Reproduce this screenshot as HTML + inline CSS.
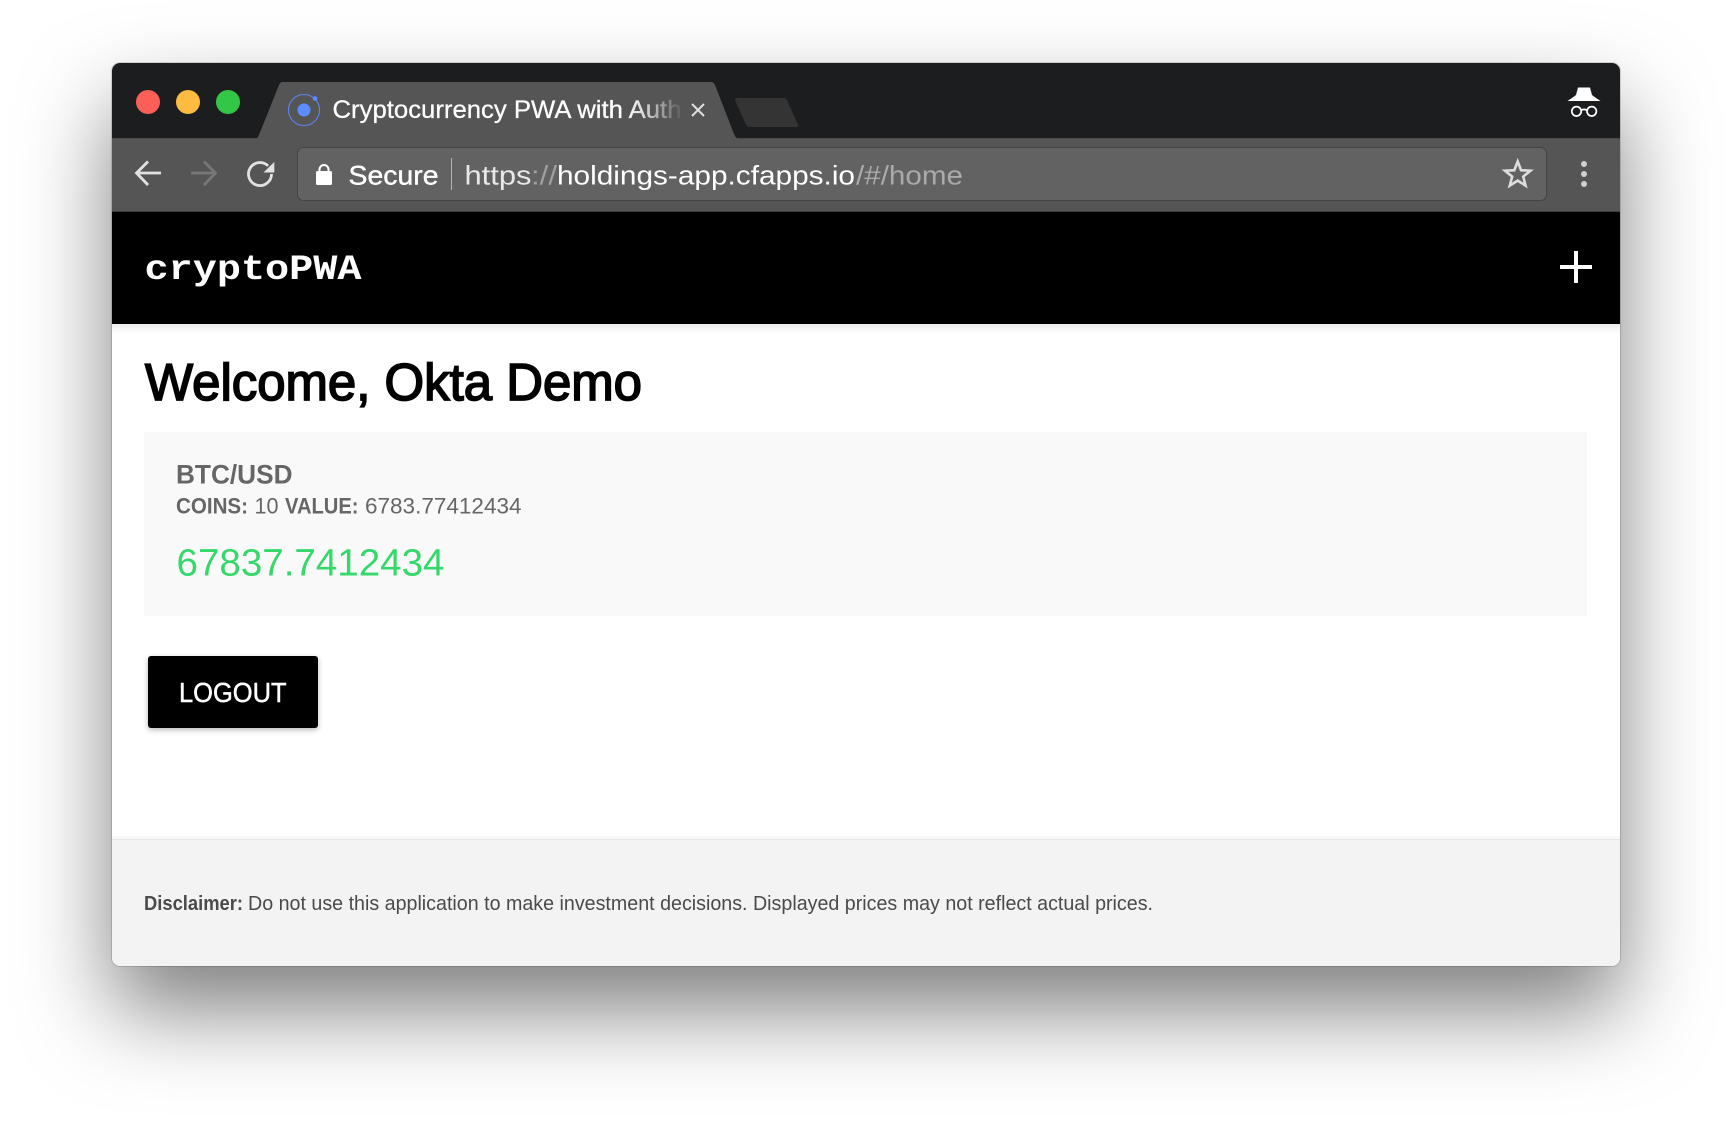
<!DOCTYPE html>
<html lang="en">
<head>
<meta charset="utf-8">
<title>cryptoPWA</title>
<style>
html,body{margin:0;padding:0;background:#fff;width:1732px;height:1126px;overflow:hidden}
#win{position:absolute;left:112px;top:63px;width:1508px;height:903px;border-radius:8px;overflow:hidden;background:#fff;box-shadow:0 44px 88px rgba(0,0,0,.5),0 0 0 1px rgba(0,0,0,.14)}
#win svg{position:absolute;left:-112px;top:-63px}
text{font-family:"Liberation Sans",sans-serif}
</style>
</head>
<body>
<div id="win">
<svg width="1732" height="1126" viewBox="0 0 1732 1126" xmlns="http://www.w3.org/2000/svg">
<defs>
<linearGradient id="fade" gradientUnits="userSpaceOnUse" x1="625" y1="0" x2="682" y2="0">
<stop offset="0" stop-color="#fff"/><stop offset="0.35" stop-color="#d8d8d8"/><stop offset="1" stop-color="#5c5c5c"/>
</linearGradient>
<linearGradient id="hs" x1="0" y1="0" x2="0" y2="1">
<stop offset="0" stop-color="#000" stop-opacity=".07"/><stop offset="1" stop-color="#000" stop-opacity="0"/>
</linearGradient>
</defs>
<!-- tab strip -->
<rect x="112" y="63" width="1508" height="75" fill="#1c1d1f"/>
<circle cx="148" cy="102" r="12" fill="#fc5f58"/>
<circle cx="188" cy="102" r="12" fill="#fdbc40"/>
<circle cx="228" cy="102" r="12" fill="#33c748"/>
<!-- toolbar -->
<rect x="112" y="138" width="1508" height="73" fill="#555"/>
<rect x="112" y="138" width="1508" height="1" fill="#3a3a3a" opacity=".4"/>
<rect x="112" y="211" width="1508" height="1" fill="#3c3c3c"/>
<!-- tab -->
<path d="M254 139C257 139 258 137 259 135L279 85C280 83 281 82 283 82H711C713 82 714 83 715 85L734 134C735 136 736 139 740 139Z" fill="#555"/>
<path d="M737 98H783C785 98 786 99 787 100L798 125C798.500 126 798 127 796 127H750C748 127 747 126 746 125L735 100C734.500 99 735 98 737 98Z" fill="#343434"/>
<circle cx="304" cy="110" r="15.500" fill="none" stroke="#5b86f0" stroke-width="1.100"/>
<circle cx="304" cy="110" r="6.500" fill="#5c8cff"/>
<circle cx="315" cy="98.500" r="2.300" fill="#5c8cff"/>
<text x="332.500" y="118" font-size="25" fill="url(#fade)" stroke="url(#fade)" stroke-width=".3" textLength="349" lengthAdjust="spacingAndGlyphs">Cryptocurrency PWA with Auth</text>
<path d="M692 104L704 116M704 104L692 116" stroke="#ddd" stroke-width="2" fill="none"/>
<!-- incognito -->
<path d="M1578 87.500H1590L1592 95C1594.500 97 1597.500 99 1600.500 101H1567.500C1570.500 99 1573.500 97 1576 95Z" fill="#fff"/>
<circle cx="1576.500" cy="111.300" r="4.700" fill="none" stroke="#fff" stroke-width="1.700"/>
<circle cx="1591.700" cy="111.300" r="4.700" fill="none" stroke="#fff" stroke-width="1.700"/>
<path d="M1581 110.300Q1584 108.500 1587 110.300" fill="none" stroke="#fff" stroke-width="1.700"/>
<!-- nav icons -->
<path d="M161 173H137M148 161.500L136.500 173L148 185" fill="none" stroke="#e2e2e2" stroke-width="2.800"/>
<path d="M191 173H215M204 161.500L215.500 173L204 185" fill="none" stroke="#777" stroke-width="2.800"/>
<path d="M268.100 165.900A11.500 11.500 0 1 0 271.500 174" fill="none" stroke="#e2e2e2" stroke-width="2.800"/>
<path d="M274.300 162V172.500H263.500Z" fill="#e2e2e2"/>
<rect x="297.500" y="147.500" width="1249" height="53" rx="6" fill="#626262" stroke="#454545"/>
<path d="M319.500 172V169.500A4.500 4.500 0 0 1 328.500 169.500V172" fill="none" stroke="#fff" stroke-width="2"/>
<rect x="316" y="171" width="16" height="14" rx="1.500" fill="#fff"/>
<text x="348.500" y="184.700" font-size="27" fill="#fff" stroke="#fff" stroke-width=".4" textLength="90" lengthAdjust="spacingAndGlyphs">Secure</text>
<rect x="451" y="158" width="1" height="32" fill="#b5b5b5"/>
<text x="464.500" y="184.700" font-size="27" fill="#e8e8e8" textLength="67" lengthAdjust="spacingAndGlyphs">https</text>
<text x="531" y="184.700" font-size="27" fill="#a0a0a0" textLength="26" lengthAdjust="spacingAndGlyphs">://</text>
<text x="557" y="184.700" font-size="27" fill="#fff" textLength="298" lengthAdjust="spacingAndGlyphs">holdings-app.cfapps.io</text>
<text x="856" y="184.700" font-size="27" fill="#aaa" textLength="107" lengthAdjust="spacingAndGlyphs">/#/home</text>
<path d="M1517.700 161.500L1521.100 170.200L1530.400 170.700L1523.200 176.600L1525.600 185.600L1517.700 180.600L1509.800 185.600L1512.200 176.600L1505 170.700L1514.300 170.200Z" fill="none" stroke="#ddd" stroke-width="2.600" stroke-linejoin="miter"/>
<circle cx="1584" cy="164" r="3" fill="#d0d0d0"/>
<circle cx="1584" cy="174" r="3" fill="#d0d0d0"/>
<circle cx="1584" cy="184" r="3" fill="#d0d0d0"/>
<!-- app header -->
<rect x="112" y="212" width="1508" height="112" fill="#000"/>
<text x="144.500" y="279" style="font-family:'Liberation Mono',monospace" font-size="35" font-weight="700" fill="#fff" textLength="217" lengthAdjust="spacingAndGlyphs">cryptoPWA</text>
<rect x="1560" y="265" width="32" height="4" fill="#fff"/>
<rect x="1574" y="251" width="4" height="32" fill="#fff"/>
<!-- content -->
<rect x="112" y="324" width="1508" height="10" fill="url(#hs)"/>
<text x="145" y="400" font-size="52" fill="#000" stroke="#000" stroke-width="1.700" textLength="497" lengthAdjust="spacingAndGlyphs">Welcome, Okta Demo</text>
<rect x="144" y="432" width="1443" height="184" fill="#f9f9f9"/>
<text x="176" y="483.700" font-size="27" font-weight="700" fill="#666" textLength="116.500" lengthAdjust="spacingAndGlyphs">BTC/USD</text>
<text x="176" y="513.600" font-size="22" font-weight="700" fill="#666" textLength="72" lengthAdjust="spacingAndGlyphs">COINS:</text>
<text x="254.500" y="513.600" font-size="22" fill="#666" textLength="24" lengthAdjust="spacingAndGlyphs">10</text>
<text x="285" y="513.600" font-size="22" font-weight="700" fill="#666" textLength="73.500" lengthAdjust="spacingAndGlyphs">VALUE:</text>
<text x="365" y="513.600" font-size="22" fill="#666" textLength="156.500" lengthAdjust="spacingAndGlyphs">6783.77412434</text>
<text x="176.500" y="575.700" font-size="38" fill="#36d86b" textLength="268" lengthAdjust="spacingAndGlyphs">67837.7412434</text>
<!-- button -->
<rect x="148" y="658" width="170" height="72" rx="3" fill="#000" opacity=".28" style="filter:blur(3px)"/>
<rect x="148" y="656" width="170" height="72" rx="3" fill="#000"/>
<text x="179" y="702" font-size="27.500" fill="#fff" stroke="#fff" stroke-width=".5" textLength="107.500" lengthAdjust="spacingAndGlyphs">LOGOUT</text>
<!-- footer -->
<rect x="112" y="836" width="1508" height="3" fill="#f8f8f8"/>
<rect x="112" y="839" width="1508" height="127" fill="#f3f3f3"/>
<rect x="112" y="839" width="1508" height="1" fill="#e6e6e6"/>
<text x="144" y="910" font-size="20" font-weight="700" fill="#4a4a4a" textLength="99" lengthAdjust="spacingAndGlyphs">Disclaimer:</text>
<text x="248" y="910" font-size="20" fill="#4a4a4a" textLength="905" lengthAdjust="spacingAndGlyphs">Do not use this application to make investment decisions. Displayed prices may not reflect actual prices.</text>
</svg>
</div>
</body>
</html>
